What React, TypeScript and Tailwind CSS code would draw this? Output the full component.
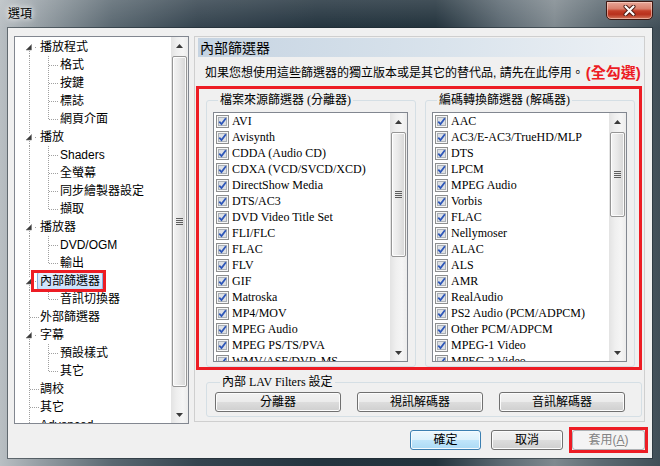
import React from 'react'

const SANS = "[font-family:'Liberation_Sans','Noto_Sans_CJK_TC',sans-serif]"
const SERIF = "[font-family:'Liberation_Serif','Noto_Sans_CJK_TC',serif]"

type TreeItem = { label: string; level: 0 | 1; arrow?: boolean; last?: boolean; first?: boolean; selected?: boolean }

const tree: TreeItem[] = [
  { label: '播放程式', level: 0, arrow: true, first: true },
  { label: '格式', level: 1 },
  { label: '按鍵', level: 1 },
  { label: '標誌', level: 1 },
  { label: '網頁介面', level: 1, last: true },
  { label: '播放', level: 0, arrow: true },
  { label: 'Shaders', level: 1 },
  { label: '全螢幕', level: 1 },
  { label: '同步繪製器設定', level: 1 },
  { label: '擷取', level: 1, last: true },
  { label: '播放器', level: 0, arrow: true },
  { label: 'DVD/OGM', level: 1 },
  { label: '輸出', level: 1, last: true },
  { label: '內部篩選器', level: 0, arrow: true, selected: true },
  { label: '音訊切換器', level: 1, last: true },
  { label: '外部篩選器', level: 0 },
  { label: '字幕', level: 0, arrow: true },
  { label: '預設樣式', level: 1 },
  { label: '其它', level: 1, last: true },
  { label: '調校', level: 0 },
  { label: '其它', level: 0 },
  { label: 'Advanced', level: 0 },
]

const sourceFilters = [
  'AVI', 'Avisynth', 'CDDA (Audio CD)', 'CDXA (VCD/SVCD/XCD)', 'DirectShow Media', 'DTS/AC3',
  'DVD Video Title Set', 'FLI/FLC', 'FLAC', 'FLV', 'GIF', 'Matroska', 'MP4/MOV', 'MPEG Audio',
  'MPEG PS/TS/PVA', 'WMV/ASF/DVR-MS',
]

const decoders = [
  'AAC', 'AC3/E-AC3/TrueHD/MLP', 'DTS', 'LPCM', 'MPEG Audio', 'Vorbis', 'FLAC', 'Nellymoser',
  'ALAC', 'ALS', 'AMR', 'RealAudio', 'PS2 Audio (PCM/ADPCM)', 'Other PCM/ADPCM', 'MPEG-1 Video',
  'MPEG-2 Video',
]

function Connector({ item }: { item: TreeItem }) {
  const w = item.level === 1 ? 45 : item.selected ? 22 : 25
  const dot = { stroke: '#a0a0a0', strokeWidth: 1, strokeDasharray: '1 1', shapeRendering: 'crispEdges' as const }
  return (
    <svg width={w} height="18" viewBox={`0 0 ${w} 18`} className="shrink-0">
      {item.level === 0 && item.arrow && (
        <>
          {!item.first && <line x1="14.5" y1="0" x2="14.5" y2="6" {...dot} />}
          <line x1="14.5" y1="13" x2="14.5" y2="18" {...dot} />
          <path d="M16.5 6.5 L16.5 12 L11 12 Z" fill="#3a3a3a" stroke="#7a7a7a" strokeWidth="0.6" />
          <rect x="20" y="9" width="1" height="1" fill="#a0a0a0" />
        </>
      )}
      {item.level === 0 && !item.arrow && (
        <>
          <line x1="14.5" y1="0" x2="14.5" y2="18" {...dot} />
          <line x1="15" y1="9.5" x2="24" y2="9.5" {...dot} />
        </>
      )}
      {item.level === 1 && (
        <>
          <line x1="14.5" y1="0" x2="14.5" y2="18" {...dot} />
          <line x1="33.5" y1="0" x2="33.5" y2={item.last ? 10 : 18} {...dot} />
          <line x1="34" y1="9.5" x2="44" y2="9.5" {...dot} />
        </>
      )}
    </svg>
  )
}

function ScrollBar({ top, height }: { top: number; height: number }) {
  return (
    <div className="w-[17px] shrink-0 flex flex-col bg-[linear-gradient(90deg,#e3e3e3,#efefef_35%,#f5f5f5_70%,#ececec)]">
      <div className="h-[17px] shrink-0 flex items-center justify-center">
        <svg width="7" height="4" viewBox="0 0 7 4">
          <path d="M0 4 L3.5 0 L7 4 Z" fill="#3a3a3a" />
        </svg>
      </div>
      <div
        className="mx-[1px] shrink-0 rounded-[2px] border border-[#969696] bg-[linear-gradient(90deg,#f4f4f4,#e9e9e9_45%,#d6d6d6)] shadow-[inset_0_0_0_1px_rgba(255,255,255,0.85)] flex items-center justify-center"
        style={{ marginTop: top, height }}
      >
        <svg width="7" height="7" viewBox="0 0 7 7">
          <path d="M0 0.5 H7 M0 2.5 H7 M0 4.5 H7 M0 6.5 H7" stroke="#5e5e5e" strokeWidth="1" />
        </svg>
      </div>
      <div className="flex-1" />
      <div className="h-[17px] shrink-0 flex items-center justify-center">
        <svg width="7" height="4" viewBox="0 0 7 4">
          <path d="M0 0 L3.5 4 L7 0 Z" fill="#3a3a3a" />
        </svg>
      </div>
    </div>
  )
}

function Check() {
  return (
    <svg width="13" height="13" viewBox="0 0 13 13" className="shrink-0">
      <rect x="0.5" y="0.5" width="12" height="12" fill="#f6f6f6" stroke="#8e8f8f" />
      <rect x="2.5" y="2.5" width="8" height="8" fill="#dde0e4" stroke="#aab0b7" />
      <path d="M3.3 6.6 L5.5 9 L9.9 3.2" fill="none" stroke="#2e57b8" strokeWidth="1.8" />
    </svg>
  )
}

function FilterList({ items, thumb }: { items: string[]; thumb: number }) {
  return (
    <div className="w-[195px] h-[250px] border border-[#828790] bg-white flex overflow-hidden">
      <div className={`flex-1 overflow-hidden ${SERIF} text-[12px] text-black`}>
        {items.map((t) => (
          <div key={t} className="h-[16px] flex items-center pl-[2px] gap-[3px] whitespace-nowrap leading-[16px]">
            <Check />
            <span>{t}</span>
          </div>
        ))}
      </div>
      <ScrollBar top={2} height={thumb} />
    </div>
  )
}

function Btn({ children, kind = 'normal', className = '' }: { children: React.ReactNode; kind?: 'normal' | 'default' | 'disabled'; className?: string }) {
  const look =
    kind === 'default'
      ? 'border-[#3c7fb1] bg-[linear-gradient(#edf7fd_0%,#dcf1fc_49%,#c1e6fb_50%,#abdaf5_100%)] shadow-[inset_0_0_0_1px_#f4fbff]'
      : kind === 'disabled'
        ? 'border-[#adb2b5] bg-[#f4f4f4] text-[#838383]'
        : 'border-[#707070] bg-[linear-gradient(#f2f2f2_0%,#ebebeb_49%,#dddddd_50%,#cfcfcf_100%)] shadow-[inset_0_0_0_1px_#fcfcfc]'
  return (
    <div className={`h-[20px] rounded-[3px] border flex items-center justify-center text-[12px] leading-[14px] ${look} ${className}`}>
      {children}
    </div>
  )
}

export default function App() {
  return (
    <div
      className={`w-[660px] h-[466px] overflow-hidden flex flex-col text-[12px] text-black ${SANS} bg-[linear-gradient(180deg,rgba(255,255,255,0.14),rgba(255,255,255,0)_28px),linear-gradient(90deg,#b9bfc3_0%,#959ea4_6%,#5a6871_17%,#35444f_30%,#24343f_48%,#23333d_66%,#5c6972_76%,#7f898f_84%,#5d6a72_91%,#404e57_100%)]`}
    >
      {/* title bar */}
      <div className="h-[28px] shrink-0 flex items-start justify-between">
        <div className="pl-[8px] h-[28px] flex items-center text-[12px] leading-[14px] [text-shadow:0_0_5px_#fff,0_0_9px_rgba(255,255,255,0.85)]">
          選項
        </div>
        <div className="mt-[1px] mr-[7px] w-[47px] h-[19px] rounded-b-[5px] border border-[#3d1711] bg-[linear-gradient(180deg,#e7a697_0%,#d97f6c_40%,#c4402a_52%,#b8301c_72%,#d2765c_100%)] shadow-[inset_0_0_0_1px_rgba(255,220,210,0.55)] flex items-center justify-center">
          <svg width="13" height="11" viewBox="0 0 13 11">
            <path d="M2.5 1.5 L10.5 9.5 M10.5 1.5 L2.5 9.5" stroke="#4a1a12" strokeWidth="4" strokeLinecap="round" />
            <path d="M2.5 1.5 L10.5 9.5 M10.5 1.5 L2.5 9.5" stroke="#ffffff" strokeWidth="2.2" strokeLinecap="round" />
          </svg>
        </div>
      </div>

      {/* client area */}
      <div className="mx-[8px] h-[430px] shrink-0 bg-[#f0f0f0] shadow-[0_0_0_1px_rgba(30,40,48,0.55)] flex flex-col pt-[8px] pl-[6px]">
        <div className="flex gap-[5px]">
          {/* tree */}
          <div className="w-[175px] h-[388px] border border-[#828790] bg-white flex overflow-hidden">
            <div className="flex-1 overflow-hidden pt-[1px]">
              {tree.map((item, i) => (
                <div key={i} className="h-[18px] flex items-center whitespace-nowrap leading-[16px]">
                  <Connector item={item} />
                  {item.selected ? (
                    <span className="relative h-[18px] px-[2px] flex items-center rounded-[2px] border border-[#84acdd] bg-[linear-gradient(#e4effd,#c9e0fc)]">
                      {item.label}
                      <span className="absolute -left-[7px] -top-[3px] -right-[4px] -bottom-[3px] border-[3px] border-[#ed1c24]" />
                    </span>
                  ) : (
                    <span>{item.label}</span>
                  )}
                </div>
              ))}
            </div>
            <ScrollBar top={2} height={331} />
          </div>

          {/* right panel */}
          <div className="w-[451px] h-[386px] border border-[#cfcfcf] flex flex-col">
            <div className="mt-[1px] ml-[3px] h-[19px] flex items-center pl-[2px] text-[14px] leading-[16px] bg-[linear-gradient(90deg,#c6d4e2,#d9e3ec_55%,#edf1f5)]">
              內部篩選器
            </div>
            <div className="mt-[8px] h-[16px] pl-[10px] flex items-center whitespace-nowrap">
              <span className="text-[12px] leading-[14px]">如果您想使用這些篩選器的獨立版本或是其它的替代品, 請先在此停用。</span>
              <span className="ml-[2px] text-[15px] leading-[16px] font-bold text-[#ed1c24]">(全勾選)</span>
            </div>

            <div className="mt-[5px] ml-[1px] w-[446px] h-[284px] border-[3px] border-[#ed1c24] flex gap-[9px] pt-[3px] pl-[7px]">
              <fieldset className="w-[210px] border border-[#d5dfe5] rounded-[3px] pl-[6px] pt-[4px] pb-[3px]">
                <legend className={`ml-[5px] px-[2px] h-[16px] leading-[16px] text-[12px] ${SERIF}`}>檔案來源篩選器 (分離器)</legend>
                <FilterList items={sourceFilters} thumb={125} />
              </fieldset>
              <fieldset className="w-[210px] border border-[#d5dfe5] rounded-[3px] pl-[6px] pt-[4px] pb-[3px]">
                <legend className={`ml-[5px] px-[2px] h-[16px] leading-[16px] text-[12px] ${SERIF}`}>編碼轉換篩選器 (解碼器)</legend>
                <FilterList items={decoders} thumb={85} />
              </fieldset>
            </div>

            <fieldset className="mt-[4px] ml-[11px] w-[436px] border border-[#d5dfe5] rounded-[3px] pl-[8px] pt-[2px] pb-[4px]">
              <legend className={`ml-[5px] px-[2px] h-[16px] leading-[16px] text-[12px] ${SERIF}`}>內部 LAV Filters 設定</legend>
              <div className="flex gap-[16px]">
                <Btn className="w-[126px]">分離器</Btn>
                <Btn className="w-[126px]">視訊解碼器</Btn>
                <Btn className="w-[126px]">音訊解碼器</Btn>
              </div>
            </fieldset>
          </div>
        </div>

        {/* dialog buttons */}
        <div className="mt-[3px] pr-[4px] flex items-center justify-end">
          <Btn kind="default" className="w-[71px]">確定</Btn>
          <Btn className="w-[72px] ml-[10px]">取消</Btn>
          <div className="ml-[6px] border-[3px] border-[#ed1c24]">
            <Btn kind="disabled" className="w-[73px]">
              <span>
                套用(<span className="underline">A</span>)
              </span>
            </Btn>
          </div>
        </div>
      </div>
    </div>
  )
}
